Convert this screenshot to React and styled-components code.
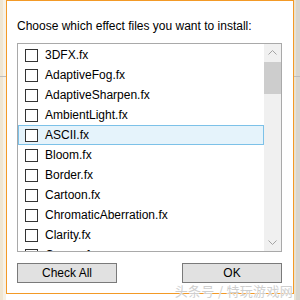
import styled, { createGlobalStyle } from "styled-components";

const Global = createGlobalStyle`
  body { margin: 0; font-family: "Liberation Sans", Arial, sans-serif; }
`;

const files = [
  "3DFX.fx",
  "AdaptiveFog.fx",
  "AdaptiveSharpen.fx",
  "AmbientLight.fx",
  "ASCII.fx",
  "Bloom.fx",
  "Border.fx",
  "Cartoon.fx",
  "ChromaticAberration.fx",
  "Clarity.fx",
  "Curves.fx",
];

// STYLED COMPONENTS
const Screen = styled.div`
  width: 300px;
  height: 300px;
  overflow: hidden;
  position: relative;
  display: flex;
  background:
    linear-gradient(180deg, transparent 76px, #bdbdbd 76px 77px, transparent 77px),
    linear-gradient(90deg, #efe6d3 0 3px, #f6f1e6 3px 6px, #fff 6px 294px, #e9e2d2 294px 296px, #d9d6cf 296px);
`;

const Dialog = styled.div`
  margin-left: 6px;
  width: 288px;
  height: 294px;
  box-sizing: border-box;
  border: 1px solid #f39a26;
  background: #fff;
  padding: 17px 11px 0 10px;
  display: flex;
  flex-direction: column;
  position: relative;
  z-index: 1;
`;

const Prompt = styled.div`
  font-size: 12px;
  line-height: 16px;
  color: #000;
  height: 25px;
`;

const ListBox = styled.div`
  height: 207px;
  border: 1px solid #a9a9a9;
  display: flex;
  overflow: hidden;
`;

const Items = styled.div`
  flex: 1;
  padding-top: 1px;
`;

const Row = styled.div`
  height: 20px;
  box-sizing: border-box;
  display: flex;
  align-items: center;
  gap: 7px;
  padding-left: 7px;
  font-size: 12px;
  color: #000;
  border: 1px solid ${(p) => (p.$selected ? "#7cc1e8" : "transparent")};
  background: ${(p) => (p.$selected ? "#e5f3fb" : "transparent")};
`;

const Box = styled.span`
  width: 13px;
  height: 13px;
  box-sizing: border-box;
  border: 1px solid #333;
  background: #fff;
  flex: none;
  margin-left: -1px;
`;

const ScrollBar = styled.div`
  width: 17px;
  background: #f0f0f0;
  display: flex;
  flex-direction: column;
  align-items: center;
`;

const Arrow = styled.svg`
  width: 17px;
  height: 17px;
  flex: none;
`;

const Thumb = styled.div`
  width: 17px;
  height: 32px;
  background: #cdcdcd;
  margin-top: 1px;
`;

const Spacer = styled.div`
  flex: 1;
`;

const Buttons = styled.div`
  display: flex;
  justify-content: space-between;
  margin-top: 11px;
`;

const Button = styled.button`
  width: ${(p) => p.$w}px;
  height: 20px;
  box-sizing: border-box;
  border: 1px solid #7a7a7a;
  background: #e1e1e1;
  font-family: inherit;
  font-size: 12px;
  color: #000;
  padding: 0;
`;

const Watermark = styled.div`
  position: absolute;
  right: 7px;
  bottom: 2px;
  z-index: 2;
  font-family: "Noto Sans CJK SC", sans-serif;
  font-size: 13px;
  line-height: 14px;
  color: #cfcfcf;
  text-shadow: 0 0 1px #fff, 0 0 1px #fff;
  letter-spacing: 0.3px;
`;

export default function App() {
  return (
    <>
      <Global />
      <Screen>
        <Dialog>
          <Prompt>Choose which effect files you want to install:</Prompt>
          <ListBox>
            <Items>
              {files.map((f) => (
                <Row key={f} $selected={f === "ASCII.fx"}>
                  <Box />
                  {f}
                </Row>
              ))}
            </Items>
            <ScrollBar>
              <Arrow viewBox="0 0 17 17">
                <path d="M4.5 10.5 L8.5 6.5 L12.5 10.5" fill="none" stroke="#a3a3a3" strokeWidth="1" />
              </Arrow>
              <Thumb />
              <Spacer />
              <Arrow viewBox="0 0 17 17">
                <path d="M4.5 6.5 L8.5 10.5 L12.5 6.5" fill="none" stroke="#a3a3a3" strokeWidth="1" />
              </Arrow>
            </ScrollBar>
          </ListBox>
          <Buttons>
            <Button $w={100}>Check All</Button>
            <Button $w={100}>OK</Button>
          </Buttons>
        </Dialog>
        <Watermark>头条号 / 特玩游戏网</Watermark>
      </Screen>
    </>
  );
}
